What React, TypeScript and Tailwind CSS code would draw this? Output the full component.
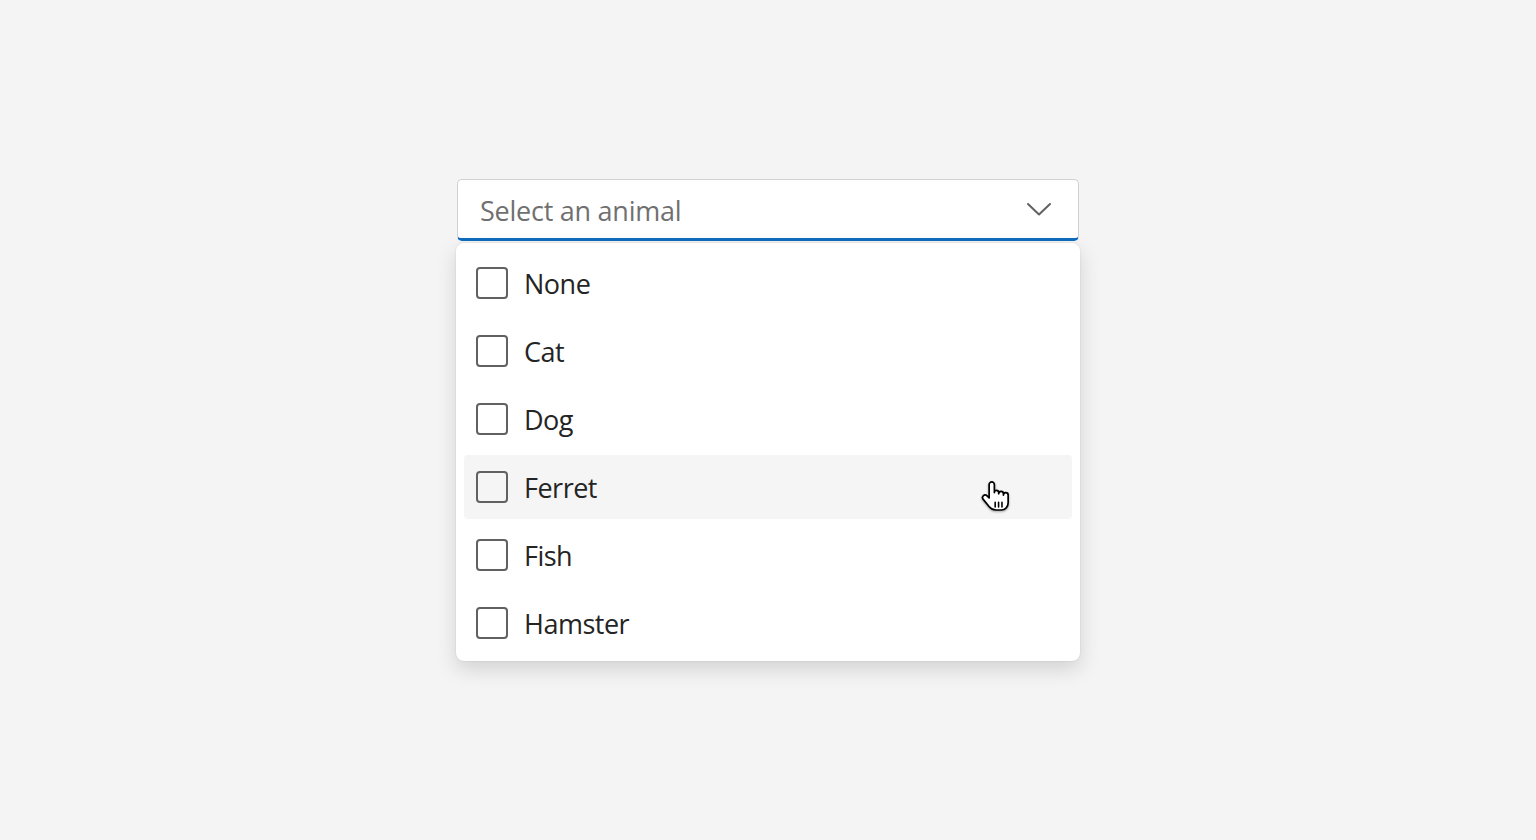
import { useState } from "react";

const ANIMALS = ["None", "Cat", "Dog", "Ferret", "Fish", "Hamster"];

function Chevron() {
  return (
    <svg width="26" height="16" viewBox="0 0 26 16" fill="none">
      <path d="M2 3 L13 13.5 L24 3" stroke="#616161" strokeWidth="2" strokeLinecap="round" strokeLinejoin="round" />
    </svg>
  );
}

function HandCursor() {
  return (
    <svg width="32" height="38" viewBox="0 0 24 29" className="drop-shadow-[0_1px_1px_rgba(0,0,0,0.35)]">
      <path
        d="M8 1.5c-1.1 0-2 .9-2 2v10.2l-1.6-1.6c-.8-.8-2.1-.8-2.9 0-.7.7-.7 1.9 0 2.7l4.6 5.6c1.300 1.6 2.9 2.5 5 2.5h4.2c3.1 0 5.2-2.5 5.2-5.5v-5.9c0-1-.8-1.8-1.8-1.8s-1.8.8-1.8 1.8v-1c0-1-.8-1.8-1.8-1.8s-1.8.8-1.8 1.8v-.8c0-1-.8-1.8-1.8-1.8S10 8.6 10 9.6V3.5c0-1.1-.9-2-2-2z"
        fill="#fff"
        stroke="#000"
        strokeWidth="1.3"
        strokeLinejoin="round"
      />
      <path d="M10.6 17v3.6M13.2 17v3.6M15.8 17v3.6" stroke="#000" strokeWidth="1.2" strokeLinecap="round" />
    </svg>
  );
}

function Option({ label, hovered }: { label: string; hovered: boolean }) {
  return (
    <div
      className={`relative flex h-16 items-center gap-4 rounded px-3 ${hovered ? "bg-[#f5f5f5]" : ""}`}
    >
      <span className="h-8 w-8 shrink-0 rounded border-2 border-[#616161]" />
      <span className="pt-0.5 text-[27px] tracking-[-0.5px] text-[#242424]">{label}</span>
      {hovered && (
        <span className="absolute left-[517px] top-[25px]">
          <HandCursor />
        </span>
      )}
    </div>
  );
}

export default function App() {
  const [hover] = useState("Ferret");
  return (
    <div
      className="flex h-[840px] w-full justify-center bg-[#f4f4f4] pt-[179px]"
      style={{ fontFamily: '"Open Sans", "Noto Sans", sans-serif' }}
    >
      <div className="flex w-[624px] flex-col">
        <div className="mx-px flex h-[62px] items-center justify-between rounded-[5px] border border-b-[3px] border-[#d1d1d1] border-b-[#0f6cbd] bg-white pl-[22px] pr-[26px]">
          <span className="pt-1 text-[27px] tracking-[-0.25px] text-[#707070]">Select an animal</span>
          <Chevron />
        </div>
        <div className="mt-[2px] flex flex-col gap-1 rounded-lg bg-white px-2 pb-1.5 pt-2 shadow-[0_8px_20px_rgba(0,0,0,0.14),0_0_2px_rgba(0,0,0,0.12)]">
          {ANIMALS.map((a) => (
            <Option key={a} label={a} hovered={a === hover} />
          ))}
        </div>
      </div>
    </div>
  );
}
